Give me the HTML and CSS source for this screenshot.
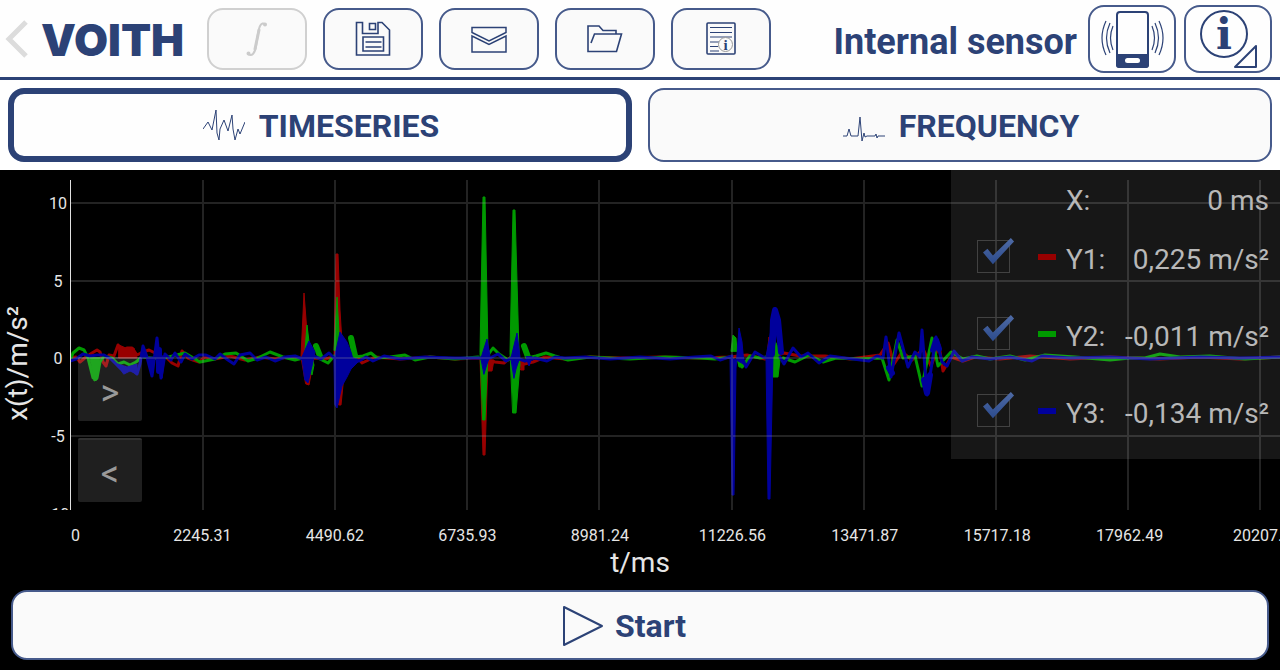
FILE: index.html
```html
<!DOCTYPE html>
<html lang="en">
<head>
<meta charset="utf-8">
<title>Internal sensor</title>
<link rel="stylesheet" href="styles.css">
</head>
<body>
<header class="topbar">
  <button class="back" aria-label="Back">
    <svg width="24" height="40" viewBox="0 0 24 40"><path d="M21 3 4 20 21 37" fill="none" stroke="#dcdcdc" stroke-width="5"/></svg>
  </button>
  <span class="logo">VOITH</span>
  <nav class="tools">
    <button class="tool" disabled aria-label="Integrate">
      <svg width="40" height="40" viewBox="0 0 40 40" fill="none" stroke="#cbcbcb" stroke-linecap="round"><path d="M28.500 5.500C24 2 22 8 21 15L19 27C18 34 15 38 11 35" stroke-width="2"/><path d="M22 11 18 30" stroke-width="3"/><circle cx="28" cy="5.500" r="1" stroke-width="2"/><circle cx="11.500" cy="34.500" r="1" stroke-width="2"/></svg>
    </button>
    <button class="tool" aria-label="Save">
      <svg width="40" height="40" viewBox="0 0 40 40" fill="none" stroke="#2c4276" stroke-width="1.600"><path d="M3.500 3.500h6v11h15.500v-11h4L36.500 11v25h-33z"/><path d="M16.500 4.500h6v6h-6z"/><path d="M10 18h20.500v14H10zM12.500 23h16M12.500 28h16"/></svg>
    </button>
    <button class="tool" aria-label="Send by mail">
      <svg width="40" height="40" viewBox="0 0 40 40" fill="none" stroke="#2c4276" stroke-width="1.500"><path d="M3 8.500h34v5l-17 8.500L3 13.500zM3 17v16h34V17l-17 8.500z"/></svg>
    </button>
    <button class="tool" aria-label="Open folder">
      <svg width="40" height="40" viewBox="0 0 40 40" fill="none" stroke="#2c4276" stroke-width="1.600"><path d="M31 15v-3.500H18L14 7H3v25.500h28.500L36.500 15H9.500L6 24"/></svg>
    </button>
    <button class="tool" aria-label="Report">
      <svg width="40" height="40" viewBox="0 0 40 40" fill="none" stroke="#2c4276" stroke-width="1.600"><rect x="6" y="4" width="28" height="31" rx="1"/><path d="M9 8.500h22M9 13.500h22M9 18h22M9 23h10M9 27.500h8M9 32h9" stroke-width="1.200"/><circle cx="24.500" cy="25.500" r="7" fill="#fafafa" stroke="#999" stroke-width="1"/><text x="24.500" y="31" class="glyph-small">i</text></svg>
    </button>
  </nav>
  <h1 class="title">Internal sensor</h1>
  <div class="side">
    <button class="square" aria-label="Select sensor">
      <svg width="64" height="60" viewBox="0 0 64 60" fill="none" stroke="#2c4276"><rect x="17" y="3" width="31" height="55" rx="3" stroke-width="2"/><path d="M16 45h33v11q0 3-3 3H19q-3 0-3-3z" fill="#2c4276" stroke="none"/><rect x="25" y="49" width="15" height="5" rx="2.500" fill="#fff" stroke="none"/><path d="M13 17q-5 12 0 24M10 14q-7 15 0 30M6 12q-8 17 0 34M52 17q5 12 0 24M55 14q7 15 0 30M59 12q8 17 0 34" stroke-width="1.200"/></svg>
    </button>
    <button class="square" aria-label="Information">
      <svg width="64" height="64" viewBox="0 0 64 64" fill="none" stroke="#2c4276"><circle cx="28" cy="27" r="23" stroke-width="2"/><text x="28" y="42" class="glyph-large">i</text><path d="M60 39v21H39z" stroke-width="2" stroke-linejoin="round"/></svg>
    </button>
  </div>
</header>

<nav class="tabs">
  <button class="tab tab-active">
    <svg width="42" height="34" viewBox="0 0 42 34" fill="none" stroke="#2c4276" stroke-width="1"><path d="M0 20 5 13 9 21 13 1 14 24 16 31 17 20 21 11 25 22 29 6 30 20 32 31 35 20 37 25 42 13"/></svg>
    TIMESERIES
  </button>
  <button class="tab">
    <svg width="42" height="34" viewBox="0 0 42 34" fill="none" stroke="#2c4276" stroke-width="1"><path d="M0 27h4l2-7 2 7h7l2-19 2 24 2-8 1 4 2-1h8l1-2 1 4 1-2h7"/></svg>
    FREQUENCY
  </button>
</nav>

<main class="chart">
  <div class="y-title">x(t)/m/s²</div>
  <div class="y-ticks"><span>10</span><span>5</span><span>0</span><span>-5</span><span>-10</span></div>
  <div class="plot">
    <svg class="traces" viewBox="70 180 1210 330" preserveAspectRatio="none" aria-label="Acceleration over time">
      <g class="trace red">
        <path class="line" d="M70 358 76 357 80 362 86 357 92 353 97 350 100 352 103 362 106 366 109 355 114 356 118 345 122 351 127 348 132 348 137 355 143 352 149 350 155 353 160 358 166 357 172 363 178 366 182 351 188 358 193 360 199 362 205 357 215 359 230 356 245 360 260 357 275 359 290 357 301 358M313 358 325 359 333 357M344 358 352 352 358 357 362 363 375 357 400 359 430 357 455 359 478 358 488 360 495 362 504 363 511 357 520 365 533 362 545 357 565 359 590 357 620 358 660 357 700 358 730 357 747 355 765 359 784 353 800 356 825 356 850 359 880 355 888 343 894 364 902 352 912 360 923 349 931 366 939 345 943 371 951 357 963 361 975 357 1000 359 1030 356 1070 359 1110 357 1160 359 1200 357 1240 359 1280 357"/>
        <path class="body" d="M301 357 304 293 308 346 314 358 309 385 306 384ZM334 358 336 254 338 254 340 310 344 375 341 405 339 405ZM480 358 483 455 485 455 488 358ZM487 360h7l-2 11h-4ZM119 345l9 4 6-1 3 10h-18ZM519 360h5v10h-3ZM767 355l2-18 3 18Z"/>
      </g>
      <g class="trace green">
        <path class="line" d="M70 361 73 353 79 348 84 350 88 358 93 378 97 378 100 362 104 356 112 358 118 364 124 362 130 365 136 362 142 357 160 359 185 353 200 362 215 359 225 354 236 353 248 361 258 358 270 352 283 357 295 360 303 358M320 359 328 363 334 356M355 357 363 356 371 353 377 358 390 357 405 355 415 360 430 357 455 359 478 357M488 355 493 348 499 354 508 360 512 357M528 358 536 356 546 353 555 356 568 360 590 357 630 359 665 357 700 358 715 359 731 357M742 367 750 356 760 358 766 357M783 358 795 362 809 355 823 362 836 358 858 359 882 358 889 380 897 340 903 358 915 356 922 386 932 338 938 366 951 352 963 359 977 356 990 359 1010 356 1025 360 1045 355 1075 357 1110 360 1130 358 1145 358 1160 354 1180 357 1210 356 1245 359 1280 357"/>
        <path class="body" d="M90 358 94 381 97 380 100 358ZM305 350 307 325 310 350 314 365 312 375 309 370ZM334 350 337 297 340 350ZM480 352 483 197 485 197 488 352 485 420 483 420ZM510 352 513 210 515 210 519 352 520 364 516 413 513 413ZM731 351 733 335 736 338 737 351ZM737 358l2 9h4v-9ZM773 337 778 347 780 360 778 377 773 377Z"/>
        <path class="thick" d="M316 346 320 356M351 338 355 356M524 346 528 357"/>
      </g>
      <g class="trace blue">
        <path class="line" d="M70 361 76 359 83 354 90 356 97 355 104 355 111 359 118 366 124 372 130 368 137 374 140 364 143 346 147 357 152 376 157 338 161 378 165 354 171 360 175 353 181 362 185 354 192 359 199 355 206 355 215 359 220 354 228 360 234 364 240 355 250 353 257 360 266 357 275 361 285 357 295 356 303 359M313 356 321 359 329 353 335 359M350 358 359 361 366 357 373 361 384 356 400 359 425 357 455 358 480 358 490 358 498 354 506 361 513 357 525 361 535 358 547 361 555 357 565 358 585 357 610 359 640 357 670 359 695 357 711 356 720 360 732 356M742 357 746 367 755 352 765 358M780 357 784 364 793 348 801 357 808 353 819 363 830 356 845 358 869 361 877 356 883 358 886 337 891 377 899 333 908 367 915 352 920 357 922 330 927 395 936 337 942 362 947 366 954 351 962 361 972 357 990 359 1010 357 1032 361 1042 356 1070 358 1110 357 1150 359 1200 357 1240 358 1280 357"/>
        <path class="body" d="M118 364 127 367 137 364 137 374 130 371 124 374ZM140 358 143 346 147 357 152 376 157 338 162 378 165 356ZM302 357 309 341 315 352 312 366 308 383 305 380ZM334 360 340 332 347 342 351 352 353 359 359 361 351 369 347 377 342 386 337 408 335 405ZM481 358 487 339 490 356 487 364 484 374ZM511 358 517 333 520 357 516 369 514 378ZM526 357l3 9 3-9ZM730 357 732 495 734 495 736 368 739 328 742 342 744 364ZM766 357 768 499 770 499 773 355 779 320 775 307 771 330Z"/>
        <path class="thick" d="M772 354 773 320 775 310 778 320 781 352M889 368 892 373M924 380 927 393 930 375M933 350 936 340 939 349M159 350 159 371"/>
      </g>
      <path class="grid" d="M203 180V510M335 180V510M467 180V510M599 180V510M732 180V510M864 180V510M996 180V510M1128 180V510M1260 180V510M71 203H1280M71 281H1280M71 358H1280M71 436H1280"/>
      <path class="axis" d="M70.500 180V510"/>
    </svg>
    <div class="pan">
      <button class="pan-button">&gt;</button>
      <button class="pan-button">&lt;</button>
    </div>
  </div>
  <div class="x-ticks">
    <div class="x-scale"><span class="origin">0</span><span>2245.31</span><span>4490.62</span><span>6735.93</span><span>8981.24</span><span>11226.56</span><span>13471.87</span><span>15717.18</span><span>17962.49</span><span>20207.8</span></div>
  </div>
  <div class="x-title">t/ms</div>
  <section class="readout">
    <div class="reading reading-x"><span class="name">X:</span><span class="value">0 ms</span></div>
    <label class="reading"><input type="checkbox" checked><i class="swatch swatch-red"></i><span class="name">Y1:</span><span class="value">0,225 m/s²</span></label>
    <label class="reading"><input type="checkbox" checked><i class="swatch swatch-green"></i><span class="name">Y2:</span><span class="value">-0,011 m/s²</span></label>
    <label class="reading"><input type="checkbox" checked><i class="swatch swatch-blue"></i><span class="name">Y3:</span><span class="value">-0,134 m/s²</span></label>
  </section>
</main>

<footer class="actions">
  <button class="start">
    <svg width="42" height="42" viewBox="0 0 42 42" fill="none" stroke="#2c4276" stroke-width="2"><path d="M2 2v38l38-19z" stroke-linejoin="round"/></svg>
    Start
  </button>
</footer>
</body>
</html>
```
FILE: styles.css
```css
* { box-sizing: border-box; }
body {
  margin: 0;
  min-height: 100vh;
  display: flex;
  flex-direction: column;
  background: #000;
  color: #e6e6e6;
  font-family: Roboto, "Liberation Sans", sans-serif;
}
button {
  display: flex;
  align-items: center;
  justify-content: center;
  margin: 0;
  padding: 0;
  font: inherit;
  color: #2c4276;
  background: #fafafa;
  border: 2px solid #465a8b;
}
svg { display: block; flex: none; }

.topbar {
  display: flex;
  align-items: center;
  height: 80px;
  padding: 0 8px 0 5px;
  background: #fefefe;
  border-bottom: 3px solid #2c4276;
}
.back { width: 24px; border: 0; background: none; }
.logo {
  width: 165px;
  margin-left: 12px;
  padding-top: 2px;
  font: 900 44px/48px Inter, sans-serif;
  color: #2c4276;
}
.tools { display: flex; gap: 16px; margin-left: 1px; }
.tool { width: 100px; height: 62px; border-radius: 16px; }
.tool:disabled { border-color: #d0d0d0; }
.title {
  flex: 1;
  margin: 0 11px 0 0;
  padding-top: 6px;
  text-align: right;
  white-space: nowrap;
  font-size: 36px;
  line-height: 42px;
  font-weight: 700;
  color: #2c4276;
}
.side { display: flex; gap: 8px; }
.square { width: 88px; height: 68px; border-radius: 16px; background: #fefefe; }
.glyph-small { font: bold 15px "Liberation Serif", serif; fill: #2c4276; stroke: none; text-anchor: middle; }
.glyph-large { font: bold 42px "DejaVu Serif", serif; fill: #2c4276; stroke: none; text-anchor: middle; }

.tabs {
  display: grid;
  grid-template-columns: 1fr 1fr;
  gap: 16px;
  padding: 8px;
  background: #fff;
}
.tab {
  height: 74px;
  gap: 14px;
  padding: 2px 0 0 2px;
  border-radius: 16px;
  font-size: 32px;
  font-weight: 700;
}
.tab-active { background: #fefefe; border: 6px solid #2c4276; }

.chart {
  position: relative;
  flex: 1;
  display: grid;
  grid-template-columns: 46px 24px 1fr;
  grid-template-rows: minmax(200px, 1fr) 36px 44px;
  padding-top: 10px;
}
.y-title {
  grid-row: 1 / 3;
  justify-self: start;
  align-self: center;
  margin-left: 2px;
  writing-mode: vertical-rl;
  transform: rotate(180deg);
  font-size: 28px;
  line-height: 32px;
}
.y-ticks {
  contain: size;
  display: grid;
  grid-template-rows: repeat(5, 24.6%);
  padding-top: 14px;
  overflow: hidden;
  text-align: center;
  font-size: 16px;
  line-height: 20px;
}
.plot { position: relative; min-width: 0; }
.traces { position: absolute; inset: 0; width: 100%; height: 100%; }
.trace { stroke-linejoin: round; stroke-linecap: round; }
.red { fill: #980000; stroke: #980000; }
.green { fill: #009a00; stroke: #009a00; }
.blue { fill: #00009c; stroke: #00009c; }
.line { fill: none; stroke-width: 3; }
.body { stroke-width: 1; }
.thick { fill: none; stroke-width: 6; }
.grid { fill: none; stroke: rgba(160, 160, 160, 0.22); stroke-width: 2; }
.axis { stroke: #e0e0e0; stroke-width: 1; }
.pan {
  position: absolute;
  left: 8px;
  bottom: 8px;
  display: flex;
  flex-direction: column;
  gap: 17px;
}
.pan-button {
  width: 64px;
  height: 64px;
  padding-top: 5px;
  border: 0;
  border-top: 2px solid rgba(255, 255, 255, 0.08);
  border-radius: 2px;
  background: rgba(255, 255, 255, 0.12);
  color: #999;
  font-size: 36px;
}
.x-ticks { grid-column: 3; overflow: hidden; padding-top: 16px; }
.x-scale {
  display: grid;
  grid-template-columns: 1fr repeat(9, 2fr);
  width: 104%;
  font-size: 16px;
  line-height: 20px;
  text-align: center;
}
.x-scale .origin { text-align: left; padding-left: 1px; }
.x-title { grid-column: 1 / 4; text-align: center; font-size: 28px; line-height: 34px; }

.readout {
  position: absolute;
  top: 0;
  right: 0;
  width: 329px;
  padding: 9px 11px 7px 26px;
  background: rgba(255, 255, 255, 0.09);
  color: #b8b8b8;
  font-size: 28px;
}
.reading {
  display: grid;
  grid-template-columns: 33px 36px auto 1fr;
  column-gap: 10px;
  align-items: center;
  height: 77px;
}
.reading input {
  position: relative;
  appearance: none;
  width: 33px;
  height: 33px;
  margin: 0 0 6px;
  border: 1px solid #424242;
}
.reading input:checked::before {
  content: "";
  position: absolute;
  left: 5px;
  top: -3px;
  width: 32px;
  height: 27px;
  background: linear-gradient(#4f6ba5, #2b4a8c);
  clip-path: polygon(0 54%, 14% 40%, 31% 65%, 87% 0, 97% 13%, 31% 97%);
}
.swatch { justify-self: end; width: 18px; height: 6px; margin-bottom: 6px; }
.swatch-red { background: #980000; }
.swatch-green { background: #009a00; }
.swatch-blue { background: #00009c; }
.name { grid-column: 3; }
.value { grid-column: 4; text-align: right; white-space: nowrap; }
.reading-x { height: 42px; }

.actions { padding: 0 11px 10px; }
.start {
  width: 100%;
  height: 70px;
  gap: 11px;
  padding: 2px 32px 0 0;
  border-radius: 16px;
  font-size: 32px;
  font-weight: 700;
}
```
